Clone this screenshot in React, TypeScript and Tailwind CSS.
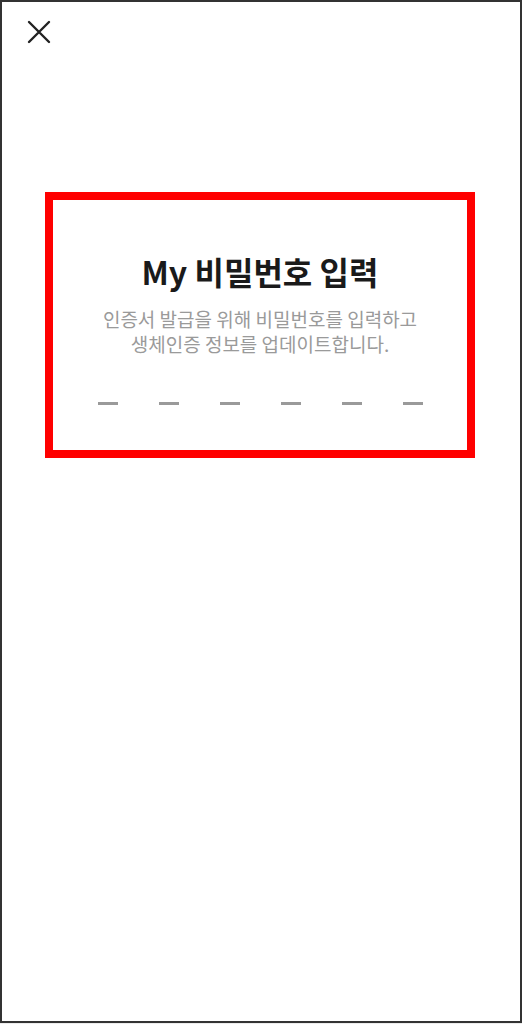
export default function App() {
  return (
    <div className="h-[1024px] w-[522px] bg-[#ececec]" style={{ fontFamily: '"Noto Sans CJK KR", "Noto Sans", sans-serif' }}>
      <div className="flex h-[1023px] flex-col border-2 border-[#333] bg-white">
        <div className="px-[25px] pt-[18px]">
          <svg width="24" height="24" viewBox="0 0 24 24" fill="none" stroke="#222" strokeWidth="2.4" strokeLinecap="round">
            <path d="M2 2L22 22M22 2L2 22" />
          </svg>
        </div>
        <div className="ml-[43px] mt-[148px] flex h-[266px] w-[430px] flex-col items-center border-8 border-[#ff0000] pt-[49px]">
          <h1 className="text-[32px] font-bold leading-[44px] text-[#1a1a1a]">My 비밀번호 입력</h1>
          <p className="mt-[13px] text-center text-[19px] leading-[25px] text-[#9a9a9a]">
            인증서 발급을 위해 비밀번호를 입력하고
            <br />
            생체인증 정보를 업데이트합니다.
          </p>
          <div className="mt-[46px] flex gap-[41px]">
            {[0, 1, 2, 3, 4, 5].map((i) => (
              <span key={i} className="h-[3px] w-[20px] bg-[#9a9a9a]" />
            ))}
          </div>
        </div>
      </div>
    </div>
  );
}
